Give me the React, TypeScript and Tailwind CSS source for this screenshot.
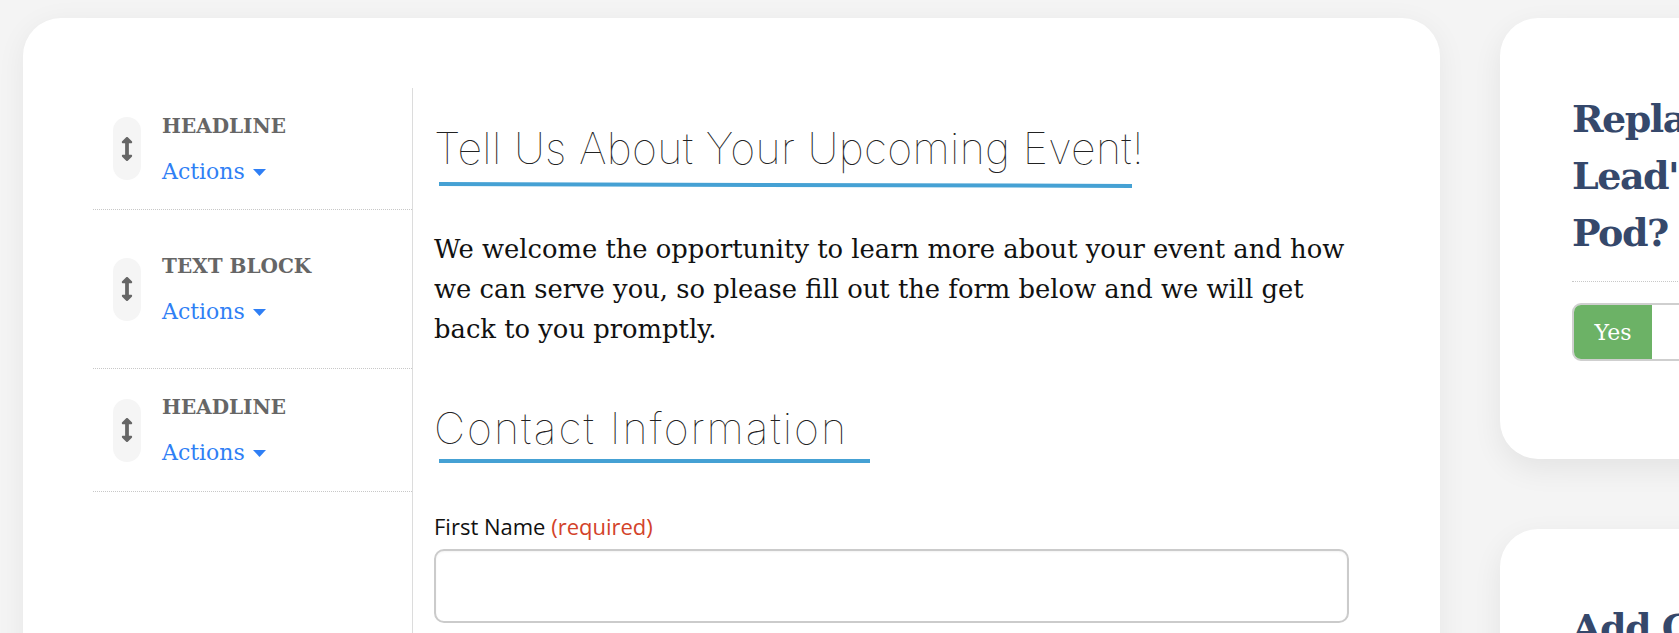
import React from "react";
import { FaArrowsAltV } from "react-icons/fa";

const serif = "font-['DejaVu_Serif','Liberation_Serif',serif]";

function SideRow({ label, h }: { label: string; h: string }) {
  return (
    <div className={`${h} flex items-center border-b border-dotted border-[#c8c8c8] pl-[20px]`}>
      <div className="w-[28px] h-[63px] rounded-full bg-[#f5f5f5] flex items-center justify-center text-[#666]">
        <FaArrowsAltV className="w-[12px] h-[24px]" />
      </div>
      <div className={`ml-[21px] flex flex-col gap-[18px] ${serif}`}>
        <div className="text-[20px] leading-[28px] font-bold text-[#666] uppercase">{label}</div>
        <div className="text-[22px] leading-[28px] text-[#2f7ff5] flex items-center">
          Actions
          <svg width="13" height="7" viewBox="0 0 13 7" className="ml-[8px] mt-[1px]" fill="#2f7ff5">
            <path d="M0 0h13L6.5 7z" />
          </svg>
        </div>
      </div>
    </div>
  );
}

export default function App() {
  return (
    <div className="w-[1679px] h-[633px] overflow-hidden bg-[#f4f4f4] flex items-start gap-[60px] pl-[23px] pt-[18px]">
      {/* Main card */}
      <div className="w-[1417px] h-[720px] shrink-0 rounded-[38px] bg-white shadow-[0_6px_30px_rgba(0,0,0,0.06)] pt-[70px] flex">
        <div className="w-[390px] shrink-0 pl-[70px]">
          <div className="w-[320px] border-r border-[#dcdcdc] h-[700px]">
            <SideRow label="Headline" h="h-[122px]" />
            <SideRow label="Text Block" h="h-[159px]" />
            <SideRow label="Headline" h="h-[123px]" />
          </div>
        </div>
        <div className="pl-[21px] pt-[34px] w-[936px]">
          <h1 className="font-['Inter',sans-serif] font-thin text-[43px] leading-[52px] text-[#222] tracking-[0.3px] whitespace-nowrap">
            Tell Us About Your Upcoming Event!
          </h1>
          <div className="mt-[9px] ml-[5px] w-[693px] h-[4px] bg-[#45a1d4] rotate-[0.15deg]" />
          <p className={`${serif} mt-[42px] text-[25.8px] leading-[40px] text-[#111] whitespace-nowrap`}>
            We welcome the opportunity to learn more about your event and how
            <br />
            we can serve you, so please fill out the form below and we will get
            <br />
            back to you promptly.
          </p>
          <h2 className="mt-[53px] font-['Inter',sans-serif] font-thin text-[43px] leading-[52px] text-[#222] tracking-[2px] whitespace-nowrap">
            Contact Information
          </h2>
          <div className="mt-[5px] ml-[5px] w-[431px] h-[4px] bg-[#45a1d4]" />
          <label className="block mt-[48px] font-['Open_Sans',sans-serif] text-[22px] leading-[30px] text-[#111]">
            First Name <span className="text-[#d3432a]">(required)</span>
          </label>
          <div className="mt-[8px] w-[915px] h-[74px] rounded-[10px] border-2 border-[#cbcbcb] bg-white shadow-[inset_0_1px_2px_rgba(0,0,0,0.05)]" />
        </div>
      </div>

      {/* Right column */}
      <div className="w-[340px] shrink-0 flex flex-col gap-[70px]">
        <div className="h-[441px] shrink-0 rounded-[38px] bg-white shadow-[0_10px_30px_rgba(0,0,0,0.07)] pt-[72px] pl-[72px]">
          <div className={`${serif} font-bold text-[38px] leading-[57px] tracking-[-1.5px] text-[#35486b] w-[200px]`}>
            Replace Lead"s Pod?
          </div>
          <div className="mt-[20px] border-t border-dotted border-[#c8c8c8]" />
          <div className="mt-[21px] h-[58px] w-[240px] rounded-[9px] border-2 border-[#cfcfcf] flex overflow-hidden">
            <div className={`w-[78px] bg-[#6cb266] text-white ${serif} text-[22px] flex items-center justify-center`}>
              Yes
            </div>
            <div className="flex-1 bg-white" />
          </div>
        </div>
        <div className="h-[400px] shrink-0 rounded-[38px] bg-white shadow-[0_10px_30px_rgba(0,0,0,0.07)] pt-[70px] pl-[72px]">
          <div className={`${serif} font-bold text-[38px] leading-[57px] tracking-[-1.5px] text-[#35486b] whitespace-nowrap`}>
            Add Content
          </div>
        </div>
      </div>
    </div>
  );
}
